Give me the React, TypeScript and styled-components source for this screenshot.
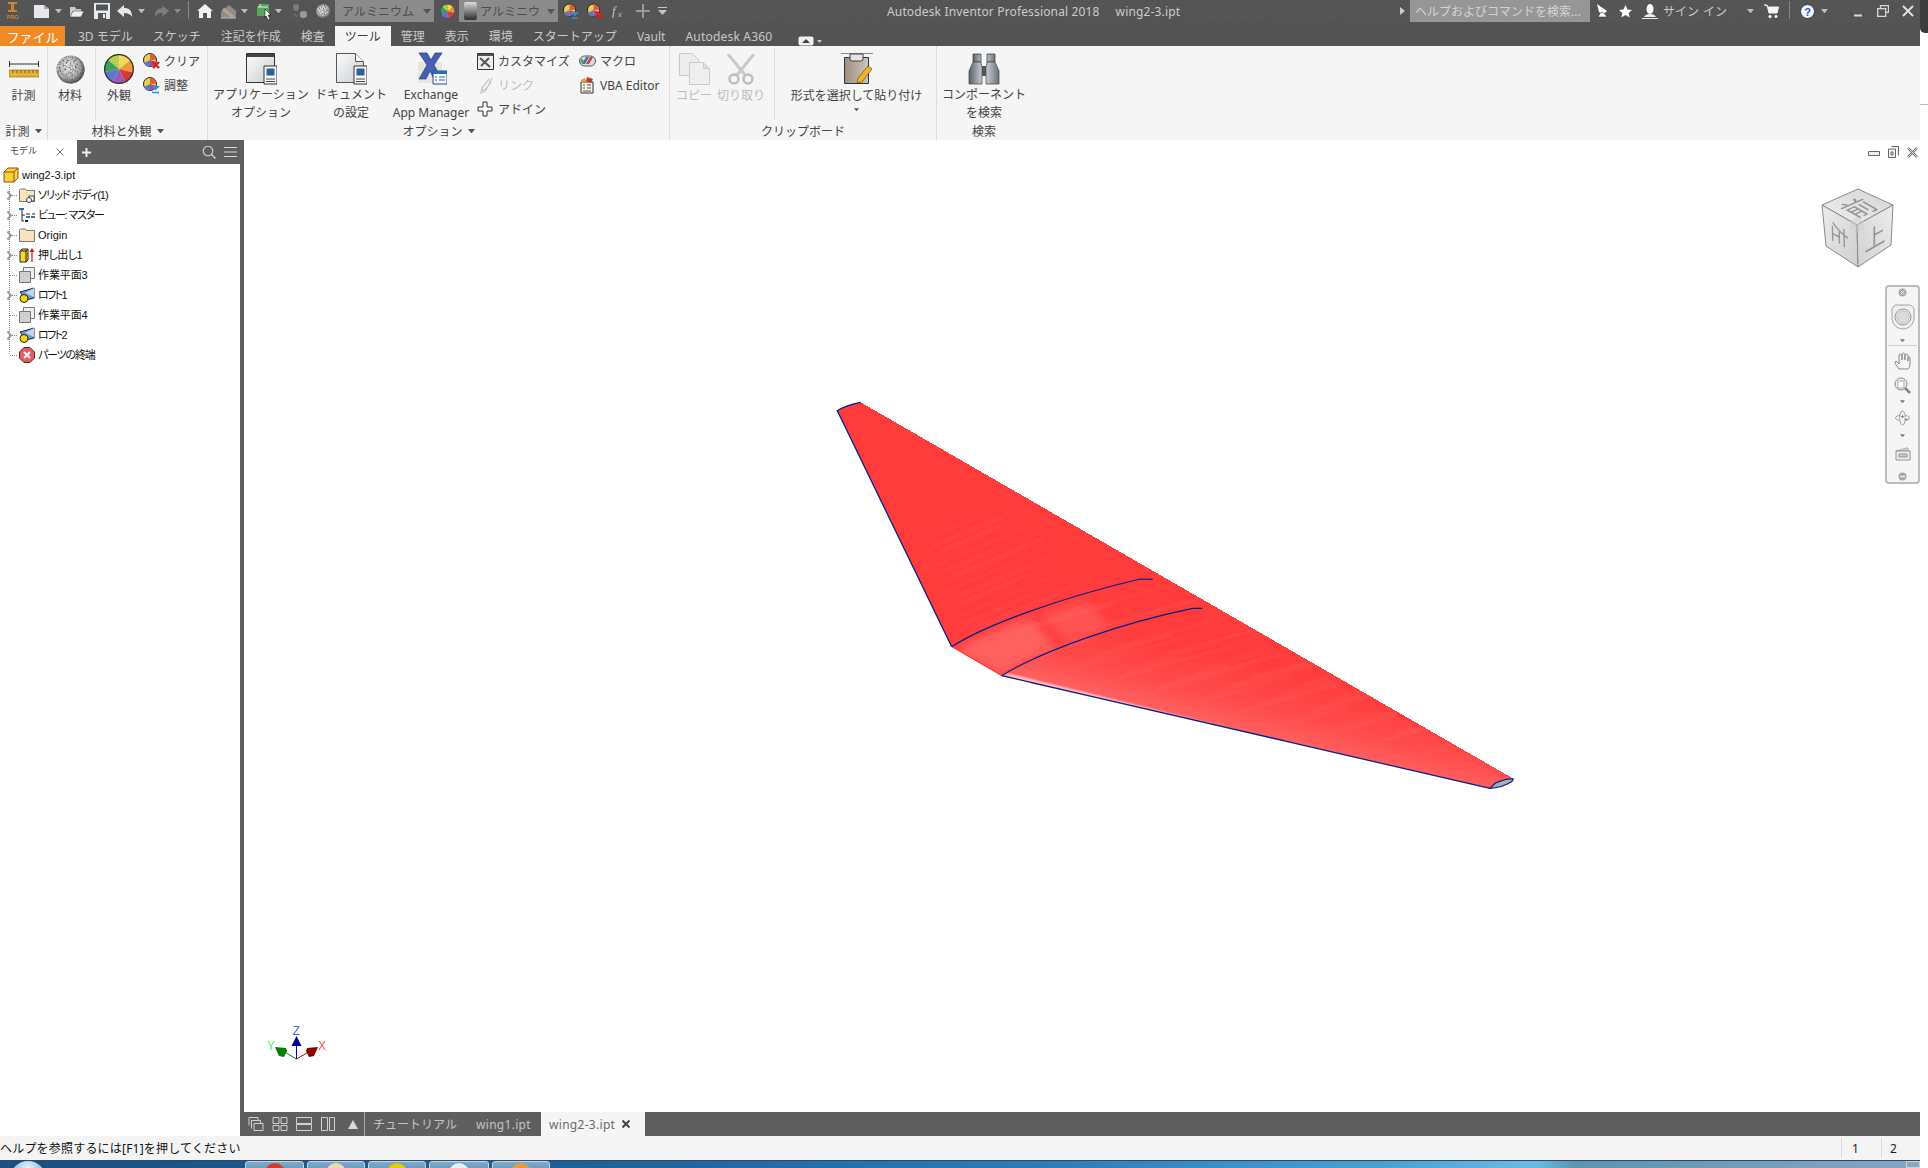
import React from 'react';
import styled, { createGlobalStyle } from 'styled-components';

const UI_FONT = `"Noto Sans", "Noto Sans CJK JP", sans-serif`;

const GlobalStyle = createGlobalStyle`
  html, body {
    margin: 0;
    padding: 0;
    background: #fff;
    overflow: hidden;
  }
  body {
    font-family: ${UI_FONT};
    font-size: 12px;
  }
`;

const Shell = styled.div`
  width: 1928px;
  height: 1168px;
  display: flex;
  overflow: hidden;
`;

const Win = styled.div`
  width: 1920px;
  height: 1168px;
  display: flex;
  flex-direction: column;
`;

const RightGutter = styled.div`
  width: 8px;
  height: 1168px;
  background: #fff;
`;

const GutterCorner = styled.div`
  height: 33px;
  background: #3c3c3c;
  border-bottom-left-radius: 5px;
`;

const GutterLine = styled.div`
  height: 1px;
  margin-top: 71px;
  background: #bdbdbd;
`;

const TitleBar = styled.div`
  height: 22px;
  display: flex;
  align-items: stretch;
  background: repeating-linear-gradient(135deg, #535353 0 2px, #585858 2px 3px);
  color: #cfcfcf;
`;

const Slot = styled.div<{ $w: number; $ml?: number }>`
  width: ${(p) => p.$w}px;
  margin-left: ${(p) => p.$ml || 0}px;
  flex: none;
  display: flex;
  align-items: center;
  justify-content: center;
`;

const Combo = styled.div<{ $w: number; $ml: number }>`
  width: ${(p) => p.$w}px;
  margin-left: ${(p) => p.$ml}px;
  flex: none;
  display: flex;
  align-items: center;
  gap: 2px;
  padding: 0 3px 0 7px;
  box-sizing: border-box;
  background: #8b8b8b;
  color: #4d4d4d;
  font-size: 12px;
  white-space: nowrap;

  span {
    flex: 1;
  }
`;

const SepV = styled.div<{ $ml: number }>`
  width: 1px;
  margin: 1px 0 3px ${(p) => p.$ml}px;
  background: #8a8a8a;
  flex: none;
`;

const WindowTitle = styled.div`
  margin-left: 220px;
  display: flex;
  gap: 16px;
  align-items: center;
  font-size: 12px;
  letter-spacing: 0.15px;
  color: #cccccc;
  white-space: nowrap;
`;

const HelpGroup = styled.div`
  margin-left: auto;
  padding-right: 6px;
  display: flex;
  align-items: stretch;
`;

const SearchBox = styled.div`
  width: 180px;
  margin-left: 5px;
  padding-left: 5px;
  box-sizing: border-box;
  display: flex;
  align-items: center;
  background: #969696;
  color: #d4d4d4;
  font-size: 12px;
  white-space: nowrap;
`;

const SignIn = styled.div`
  width: 82px;
  margin-left: 5px;
  display: flex;
  align-items: center;
  color: #c8c8c8;
  font-size: 12px;
  word-spacing: 1px;
  white-space: nowrap;
`;

const TabsBar = styled.div`
  height: 24px;
  display: flex;
  align-items: flex-end;
  background: #535353;
`;

const FileTab = styled.div`
  width: 65px;
  height: 20px;
  margin-right: 3px;
  display: flex;
  align-items: center;
  justify-content: center;
  background: #f08a24;
  color: #fff;
  font-size: 13px;
`;

const RibbonTab = styled.div<{ $active?: boolean; $wide?: boolean }>`
  height: 20px;
  padding: 0 10px;
  display: flex;
  align-items: center;
  font-size: 12px;
  white-space: nowrap;
  letter-spacing: ${(p) => (p.$wide ? '0.2px' : '0')};
  color: ${(p) => (p.$active ? '#3a3a3a' : '#c9c9c9')};
  background: ${(p) => (p.$active ? '#f5f5f5' : 'transparent')};
`;

const Ribbon = styled.div`
  height: 94px;
  display: flex;
  background: #f5f5f5;
  color: #444;
`;

const Panel = styled.div<{ $w: number; $last?: boolean }>`
  width: ${(p) => p.$w}px;
  box-sizing: border-box;
  display: flex;
  flex-direction: column;
  border-right: ${(p) => (p.$last ? 'none' : '1px solid #dcdcdc')};
`;

const PanelBody = styled.div`
  height: 76px;
  display: flex;
`;

const PanelTitle = styled.div`
  height: 18px;
  display: flex;
  align-items: center;
  justify-content: center;
  gap: 5px;
  white-space: nowrap;
`;

const LargeButton = styled.div<{ $w: number; $disabled?: boolean }>`
  width: ${(p) => p.$w}px;
  flex: none;
  display: flex;
  flex-direction: column;
  align-items: center;
  color: ${(p) => (p.$disabled ? '#bcbcbc' : 'inherit')};
`;

const LargeIcon = styled.div`
  height: 41px;
  padding-top: 5px;
  box-sizing: border-box;
  display: flex;
  align-items: center;
  justify-content: center;
`;

const LargeLabel = styled.div`
  line-height: 18px;
  text-align: center;
  white-space: nowrap;
`;

const DropHint = styled.div`
  height: 9px;
  display: flex;
  align-items: center;
  justify-content: center;
`;

const InnerSep = styled.div<{ $ml: number; $mr: number }>`
  width: 1px;
  height: 72px;
  margin: 2px ${(p) => p.$mr}px 0 ${(p) => p.$ml}px;
  background: #dcdcdc;
  flex: none;
`;

const SmallCol = styled.div<{ $ml: number; $w: number }>`
  width: ${(p) => p.$w}px;
  margin-left: ${(p) => p.$ml}px;
  padding-top: 3px;
  flex: none;
`;

const SmallRow = styled.div<{ $disabled?: boolean }>`
  height: 24px;
  display: flex;
  align-items: center;
  gap: 4px;
  white-space: nowrap;
  color: ${(p) => (p.$disabled ? '#bcbcbc' : 'inherit')};
`;

const Main = styled.div`
  flex: 1;
  min-height: 0;
  display: flex;
`;

const Browser = styled.div`
  width: 244px;
  box-sizing: border-box;
  flex: none;
  border-right: 4px solid #5f5f5f;
  background: #fff;
`;

const BrowserHead = styled.div`
  height: 24px;
  width: 244px;
  display: flex;
  background: #5f5f5f;
`;

const BrowserTab = styled.div`
  width: 77px;
  box-sizing: border-box;
  padding: 0 0 0 10px;
  display: flex;
  align-items: center;
  gap: 19px;
  background: #fff;
  color: #444;
  font-size: 9px;

  span {
    margin-bottom: 3px;
  }
`;

const BrowserTools = styled.div`
  flex: 1;
  display: flex;
  align-items: center;
  padding: 0 7px 0 5px;
  gap: 8px;
`;

const ToolSpacer = styled.span`
  flex: 1;
`;

const TreeList = styled.div`
  padding-top: 1px;
`;

const TreeRow = styled.div<{ $root?: boolean }>`
  height: 20px;
  display: flex;
  align-items: center;
  padding-left: ${(p) => (p.$root ? 3 : 0)}px;
  gap: 3px;
  color: #111;
  white-space: nowrap;
  font-family: "Liberation Sans", "Noto Sans CJK JP", sans-serif;
  font-size: 11px;
  font-feature-settings: "palt";
`;

const TreeLabel = styled.span<{ $tight: number }>`
  letter-spacing: ${(p) => -p.$tight}px;
  margin-bottom: ${(p) => (p.$tight ? 2 : 0)}px;
`;

const Work = styled.div`
  flex: 1;
  min-width: 0;
  display: flex;
  flex-direction: column;
`;

const Canvas = styled.div`
  flex: 1;
  position: relative;
  background: #fff;
  overflow: hidden;
`;

const Scene = styled.svg`
  position: absolute;
  left: 0;
  top: 0;
`;

const ViewControls = styled.div`
  position: absolute;
  top: 6px;
  right: 2px;
  display: flex;
  align-items: center;
  gap: 8px;
`;

const NavBar = styled.div`
  position: absolute;
  left: 1641px;
  top: 145px;
  width: 35px;
  height: 199px;
  box-sizing: border-box;
  border: 2px solid #bcbcbc;
  border-radius: 4px;
  background: #f5f5f5;
  display: flex;
  flex-direction: column;
  align-items: center;
`;

const NavItem = styled.div<{ $h: number }>`
  height: ${(p) => p.$h}px;
  flex: none;
  display: flex;
  align-items: center;
  justify-content: center;
  align-self: stretch;
`;

const NavFoot = styled(NavItem)`
  margin-top: auto;
`;

const NavDivider = styled.div`
  height: 1px;
  margin: 0 1px;
  align-self: stretch;
  flex: none;
  background: #cfcfcf;
`;

const DocBar = styled.div`
  height: 24px;
  display: flex;
  align-items: stretch;
  background: #5f5f5f;
`;

const DocTools = styled.div`
  width: 121px;
  box-sizing: border-box;
  padding-left: 4px;
  display: flex;
  align-items: center;
  gap: 8px;
  border-right: 1px solid #a8a8a8;
`;

const DocTab = styled.div<{ $active?: boolean; $w: number; $wide?: boolean }>`
  width: ${(p) => p.$w}px;
  box-sizing: border-box;
  display: flex;
  align-items: center;
  padding-left: 8px;
  gap: 7px;
  white-space: nowrap;
  letter-spacing: ${(p) => (p.$wide ? '0.3px' : '0')};
  color: ${(p) => (p.$active ? '#6a6a6a' : '#c4c4c4')};
  background: ${(p) => (p.$active ? '#f5f5f5' : 'transparent')};
`;

const Status = styled.div`
  height: 24px;
  display: flex;
  align-items: center;
  background: #f4f4f4;
  color: #111;
`;

const StatusText = styled.div`
  flex: 1;
  letter-spacing: 0.2px;
`;

const StatusCell = styled.div<{ $w: number; $pad: number }>`
  width: ${(p) => p.$w}px;
  height: 20px;
  box-sizing: border-box;
  padding-left: ${(p) => p.$pad}px;
  display: flex;
  align-items: center;
  border-left: 1px solid #d9d9d9;
  color: #222;
`;

const Taskbar = styled.div`
  height: 8px;
  display: flex;
  overflow: hidden;
  border-top: 1px solid #2c4a63;
  box-sizing: border-box;
  background: linear-gradient(90deg, #1b4f80 0%, #1f5f99 30%, #2d7dba 55%, #4b9fd2 72%, #69bce4 80%, #5b95ae 82%, #7aa0bb 94%, #86a6bf 100%);
`;

const Orb = styled.div`
  width: 36px;
  height: 36px;
  margin: 0 0 0 10px;
  border-radius: 50%;
  background: radial-gradient(circle at 50% 20%, #eaf3fa, #7fa9c9 60%);
  flex: none;
`;

const TaskGroup = styled.div`
  margin-left: 199px;
  display: flex;
  gap: 3px;
`;

const TaskButton = styled.div<{ $w: number; $c: string }>`
  width: ${(p) => p.$w}px;
  height: 20px;
  box-sizing: border-box;
  border: 1px solid #c5d6e4;
  border-radius: 3px 3px 0 0;
  background: linear-gradient(180deg, #7ea9c9, #4d83ad);
  display: flex;
  justify-content: center;

  &::after {
    content: '';
    width: 20px;
    height: 20px;
    margin-top: 1px;
    border-radius: 50% 50% 0 0;
    background: ${(p) => p.$c};
  }
`;

const CornerBtn = styled.div`
  margin-left: auto;
  width: 14px;
  border: 1px solid #c3d3df;
  box-sizing: border-box;
  background: #8fa7ba;
`;

/* ------------- icons ------------- */

const Tri = ({ c = '#bdbdbd', s = 7 }: { c?: string; s?: number }) => (
  <svg width={s} height={s / 2 + 1} viewBox="0 0 8 5">
    <path d="M0 0h8L4 5z" fill={c} />
  </svg>
);

const Logo = () => (
  <svg width="13" height="20" viewBox="0 0 13 20">
    <path d="M2 1h9v2H8v6h3v2H2V9h3V3H2z" fill="#c98436" />
    <text x="6.5" y="18" textAnchor="middle" fontSize="5.5" fontWeight="700" fill="#c98436" fontFamily="Liberation Sans">PRO</text>
  </svg>
);

const NewDoc = () => (
  <svg width="17" height="15" viewBox="0 0 17 15">
    <path d="M1 1h10l5 4v9H1z" fill="#e6e8ee" />
    <path d="M11 1v4h5" fill="#9da3ad" />
  </svg>
);
const OpenIco = () => (
  <svg width="16" height="13" viewBox="0 0 16 13">
    <path d="M1 2h5l1 2h5v2H4L1 12z" fill="#c9ccd2" />
    <path d="M4 6h11l-3 6H1z" fill="#eceef1" stroke="#30343a" strokeWidth=".5" />
  </svg>
);
const SaveIco = () => (
  <svg width="16" height="16" viewBox="0 0 16 16">
    <path d="M0 0h16v16H0z" fill="#e8eaee" />
    <path d="M2 1.5h12v6H2z" fill="#50565f" />
    <path d="M4 10h8v6H4z" fill="#50565f" />
    <path d="M9 11h2v4H9z" fill="#e8eaee" />
  </svg>
);
const ArrowTurn = ({ c, flip }: { c: string; flip?: boolean }) => (
  <svg width="16" height="13" viewBox="0 0 16 13" style={flip ? { transform: 'scaleX(-1)' } : undefined}>
    <path d="M7 0v3c5 0 8 2 8 9-2-3-4-4-8-4v4L0 6z" fill={c} />
  </svg>
);
const HomeIco = () => (
  <svg width="16" height="16" viewBox="0 0 16 16">
    <path d="M8 1l8 7h-2v7H10v-5H6v5H2V8H0z" fill="#f0f0f0" />
  </svg>
);
const SketchGrey = () => (
  <svg width="17" height="15" viewBox="0 0 17 15">
    <path d="M1 8l8-7 7 6v7H1z" fill="#8c8c8c" />
    <path d="M3 5l10 8" stroke="#b5a58e" strokeWidth="3" />
    <path d="M1 14h15" stroke="#bbb" />
  </svg>
);
const CubeCursor = () => (
  <svg width="15" height="17" viewBox="0 0 15 17">
    <path d="M0 4l3-3h9v12H0z" fill="#5ba55b" />
    <path d="M1 4h10M3 1v3" stroke="#dff0df" />
    <path d="M8 6l6 6h-3l2 4-2 1-2-4-1 2z" fill="#fff" stroke="#111" strokeWidth=".6" />
  </svg>
);
const GreyNodes = () => (
  <svg width="15" height="16" viewBox="0 0 15 16">
    <rect x="1" y="1" width="6" height="7" rx="3" fill="#7d7d7d" />
    <rect x="8" y="8" width="7" height="7" rx="3" fill="#999" />
    <path d="M3 10v3h3" stroke="#777" fill="none" />
  </svg>
);

const MaterialBall = ({ size }: { size: number }) => (
  <svg width={size} height={size} viewBox="0 0 30 30">
    <defs>
      <radialGradient id="ballShade" cx=".42" cy=".4" r=".62">
        <stop offset="0" stopColor="#f4f4f4" />
        <stop offset=".65" stopColor="#b4b4b4" />
        <stop offset="1" stopColor="#3a3a3a" />
      </radialGradient>
      <filter id="ballNoise" x="0" y="0" width="100%" height="100%">
        <feTurbulence type="fractalNoise" baseFrequency=".55" numOctaves="2" seed="4" />
        <feColorMatrix values="0 0 0 0 .15  0 0 0 0 .15  0 0 0 0 .15  3.2 0 0 0 -1.35" />
        <feComposite in2="SourceGraphic" operator="in" />
        <feMerge>
          <feMergeNode in="SourceGraphic" />
          <feMergeNode />
        </feMerge>
      </filter>
    </defs>
    <circle cx="15" cy="15" r="14.5" fill="url(#ballShade)" filter="url(#ballNoise)" />
  </svg>
);

const WHEEL = ['#b7cf4e', '#f1d957', '#e99a3a', '#d83a38', '#9a5bb5', '#5d78c8', '#3aa05a'];

const ColorBall = ({ size }: { size: number }) => {
  const n = WHEEL.length;
  const wedge = (i: number) => {
    const a0 = (i / n) * Math.PI * 2 - Math.PI * 0.78;
    const a1 = ((i + 1) / n) * Math.PI * 2 - Math.PI * 0.78;
    return `M15 15L${15 + 15 * Math.cos(a0)} ${15 + 15 * Math.sin(a0)}A15 15 0 0 1 ${15 + 15 * Math.cos(a1)} ${15 + 15 * Math.sin(a1)}z`;
  };
  return (
    <svg width={size} height={size} viewBox="0 0 30 30">
      {WHEEL.map((c, i) => (
        <path key={c} d={wedge(i)} fill={c} />
      ))}
      <circle cx="15" cy="15" r="14.3" fill="none" stroke="#2d2d2d" strokeWidth="1.2" />
    </svg>
  );
};

const BallClear = () => (
  <svg width="17" height="16" viewBox="0 0 17 16">
    <circle cx="7" cy="7" r="6.5" fill="#e9cf50" stroke="#222" />
    <path d="M7 7L1 10a6 6 0 0 0 6 3.5z" fill="#5d78c8" />
    <path d="M7 7l6 2a6 6 0 0 1-6 4z" fill="#b1478f" />
    <path d="M7 7V.8a6 6 0 0 1 6 6z" fill="#df5c3a" />
    <path d="M10 9l6 6m0-6l-6 6" stroke="#d21f1f" strokeWidth="2.4" />
  </svg>
);
const BallAdjust = () => (
  <svg width="17" height="17" viewBox="0 0 17 17">
    <circle cx="7" cy="7" r="6.5" fill="#e9cf50" stroke="#222" />
    <path d="M7 7L1 10a6 6 0 0 0 6 3.5z" fill="#5d78c8" />
    <path d="M7 7l6 2a6 6 0 0 1-6 4z" fill="#b1478f" />
    <path d="M7 7V.8a6 6 0 0 1 6 6z" fill="#df5c3a" />
    <path d="M8 9h9l-4.5 4.5z" fill="#2d8fd6" />
    <path d="M9 15.5h7" stroke="#2d8fd6" strokeWidth="1.5" />
  </svg>
);

const Ruler = () => (
  <svg width="30" height="20" viewBox="0 0 30 20">
    <path d="M.5 2v6M29.5 2v6M1 5h28" stroke="#333" fill="none" />
    <path d="M0 11h30v7H0z" fill="#e3b23c" stroke="#9a7420" strokeWidth=".7" />
    <path d="M4 11v3M8 11v3M12 11v3M16 11v3M20 11v3M24 11v3M28 11v3" stroke="#7a5a10" />
  </svg>
);

const MiniPanel = () => (
  <>
    <path d="M18 13h13v18H18z" fill="#f7f7f7" stroke="#333" />
    <path d="M20.5 15.5h8v7h-8z" fill="#2f5f9a" />
    <path d="M20 26h9M20 28.5h9" stroke="#444" />
  </>
);

const AppOptions = () => (
  <svg width="31" height="32" viewBox="0 0 31 32">
    <defs>
      <linearGradient id="paperG" x1="0" y1="0" x2="1" y2="1">
        <stop offset="0" stopColor="#fdfdfd" />
        <stop offset="1" stopColor="#c7ccd2" />
      </linearGradient>
    </defs>
    <path d="M.5.5h28v29H.5z" fill="url(#paperG)" stroke="#333" />
    <path d="M1 1h27v3H1z" fill="#454545" />
    <MiniPanel />
  </svg>
);

const DocOptions = () => (
  <svg width="31" height="32" viewBox="0 0 31 32">
    <path d="M.5.5h19l8 8v21H.5z" fill="url(#paperG)" stroke="#555" />
    <path d="M19.5.5v8h8" fill="#fff" stroke="#555" />
    <MiniPanel />
  </svg>
);

const ExchangeIco = () => (
  <svg width="31" height="33" viewBox="0 0 31 33">
    <path d="M2 10h24v21H2z" fill="#e7e7e0" />
    <path d="M3 1h8l4 7 4-7h7l-8 12 8 14h-8l-4-8-4 8H3l8-14z" fill="#4660b6" stroke="#27397f" strokeWidth=".7" />
    <path d="M17 19h14v13H17z" fill="#f7f7f7" stroke="#274c86" />
    <path d="M17 19h14v3H17z" fill="#2d6fb2" />
    <path d="M19 25h2M23 25h6M19 28h2M23 28h6" stroke="#2d6fb2" />
  </svg>
);

const CustomizeIco = () => (
  <svg width="17" height="17" viewBox="0 0 17 17">
    <path d="M.5.5h16v16H.5z" fill="#eee" stroke="#333" />
    <path d="M1 1h15v2H1z" fill="#555" />
    <path d="M3 5l10 9M4 13l8-8" stroke="#555" strokeWidth="2" />
  </svg>
);
const LinkIco = () => (
  <svg width="17" height="17" viewBox="0 0 17 17">
    <path d="M12 2L5 11a2 2 0 0 0 3 2l6-8M15 1l-6 12-5 3 1-5" stroke="#c8c8c8" strokeWidth="1.4" fill="none" />
  </svg>
);
const AddinIco = () => (
  <svg width="17" height="17" viewBox="0 0 17 17">
    <path d="M6 1h4v5h5v4h-5v5H6v-5H1V6h5z" fill="#f8f8f8" stroke="#333" />
  </svg>
);
const MacroIco = () => (
  <svg width="17" height="12" viewBox="0 0 17 12">
    <rect x=".5" y="1" width="16" height="10" rx="5" fill="#ddd" stroke="#555" />
    <path d="M3 9l4-7h3L6 9z" fill="#3a6fc4" />
    <path d="M7 9l4-7h3l-4 7z" fill="#d23b3b" />
    <path d="M1 6l2-3 2 3-2 3z" fill="#5aa65a" />
  </svg>
);
const VbaIco = () => (
  <svg width="17" height="17" viewBox="0 0 17 17">
    <path d="M2 5h12v11H2z" fill="#f6f3e4" stroke="#333" />
    <path d="M4 8h2M8 8h4M4 11h2M8 11h4M4 14h8" stroke="#555" />
    <path d="M8 0l6 2-2 4-5-2z" fill="#c93535" />
    <path d="M2 3l4-2 1 3-4 2z" fill="#d8a12a" />
  </svg>
);

const CopyIco = () => (
  <svg width="31" height="32" viewBox="0 0 31 32">
    <path d="M.5.5h13l6 6v16H.5z" fill="#ececec" stroke="#c9c9c9" />
    <path d="M10.5 9.5h14l6 6v16h-20z" fill="#efefef" stroke="#c9c9c9" />
    <path d="M24.5 9.5v6h6" fill="#ddd" stroke="#c9c9c9" />
  </svg>
);
const CutIco = () => (
  <svg width="28" height="31" viewBox="0 0 28 31">
    <path d="M1 0l17 21M27 0L10 21" stroke="#c8c8c8" strokeWidth="3" />
    <circle cx="7" cy="25" r="4.5" fill="none" stroke="#bdbdbd" strokeWidth="2.5" />
    <circle cx="21" cy="25" r="4.5" fill="none" stroke="#bdbdbd" strokeWidth="2.5" />
  </svg>
);
const PasteIco = () => (
  <svg width="32" height="32" viewBox="0 0 32 32">
    <defs>
      <linearGradient id="boardG" x1="0" y1="0" x2="1" y2="0">
        <stop offset="0" stopColor="#9c8f80" />
        <stop offset="1" stopColor="#cfc6bb" />
      </linearGradient>
    </defs>
    <path d="M0 .5h32" stroke="#888" />
    <path d="M3.5 4.5h24v26h-24z" fill="url(#boardG)" stroke="#333" />
    <path d="M9 1h13v5a2 2 0 0 1-2 2H11a2 2 0 0 1-2-2z" fill="#e5e5e5" stroke="#444" />
    <path d="M27 13l4 3-10 13-5 1 1-5z" fill="#f0b62a" stroke="#6b4a08" strokeWidth=".7" />
  </svg>
);
const Binoculars = () => (
  <svg width="32" height="32" viewBox="0 0 32 32">
    <defs>
      <linearGradient id="binoG" x1="0" y1="0" x2="1" y2="0">
        <stop offset="0" stopColor="#5a6168" />
        <stop offset=".5" stopColor="#d6dde3" />
        <stop offset="1" stopColor="#6a7178" />
      </linearGradient>
    </defs>
    <path d="M5 1h8v8H5zM19 1h8v8h-8z" fill="url(#binoG)" stroke="#333" strokeWidth=".7" />
    <path d="M5 9h8l1 6v16H1V18zM19 9h8l4 9v13H18V15z" fill="url(#binoG)" stroke="#444" strokeWidth=".7" />
    <path d="M14 13h4v10h-4z" fill="#555" />
  </svg>
);

const Satellite = () => (
  <svg width="12" height="14" viewBox="0 0 12 14">
    <path d="M1 0l10 7c-2 3-6 3-8 1z" fill="#fff" />
    <path d="M5 8l-3 5h9L8 9z" fill="#fff" stroke="#222" strokeWidth=".5" />
  </svg>
);
const StarIco = () => (
  <svg width="13" height="13" viewBox="0 0 13 13">
    <path d="M6.5 0l2 4.5 4.5.5-3.3 3 1 4.5-4.2-2.4-4.2 2.4 1-4.5L0 5l4.5-.5z" fill="#fff" />
  </svg>
);
const PersonIco = () => (
  <svg width="16" height="15" viewBox="0 0 16 15">
    <ellipse cx="8" cy="5" rx="3.5" ry="5" fill="#fff" />
    <path d="M2 13c1-2 3-3 6-3s5 1 6 3H2z" fill="#e9ecf2" />
    <path d="M0 14.5h16" stroke="#e9ecf2" />
  </svg>
);
const CartIco = () => (
  <svg width="15" height="15" viewBox="0 0 15 15">
    <path d="M0 1h3l2 8h8l1.5-6H4" fill="#f4f4f4" stroke="#f4f4f4" strokeWidth="1" />
    <circle cx="6" cy="12.5" r="1.5" fill="#fff" />
    <circle cx="12" cy="12.5" r="1.5" fill="#fff" />
  </svg>
);
const HelpIco = () => (
  <svg width="15" height="15" viewBox="0 0 15 15">
    <circle cx="7.5" cy="7.5" r="7" fill="#f4f6fb" stroke="#27355f" />
    <text x="7.5" y="11.5" textAnchor="middle" fontSize="11" fontWeight="700" fill="#2457c2" fontFamily="Liberation Sans">?</text>
  </svg>
);
const WinMin = () => (
  <svg width="8" height="12" viewBox="0 0 8 12">
    <path d="M0 10.5h8" stroke="#d8d8d8" strokeWidth="2" />
  </svg>
);
const WinRestore = () => (
  <svg width="12" height="12" viewBox="0 0 12 12">
    <path d="M3.5 3V.7h8v6.6H8.5M.7 3.7h8v7.6h-8z" fill="none" stroke="#d8d8d8" strokeWidth="1.3" />
  </svg>
);
const WinClose = () => (
  <svg width="12" height="12" viewBox="0 0 12 12">
    <path d="M1 1l10 10M11 1L1 11" stroke="#e4e4e4" strokeWidth="1.8" />
  </svg>
);

const FxIco = () => (
  <svg width="15" height="16" viewBox="0 0 15 16">
    <text x="0" y="12" fontSize="13" fontStyle="italic" fill="#c4c4c4" fontFamily="Liberation Serif">f</text>
    <text x="6" y="14" fontSize="8" fontStyle="italic" fill="#c4c4c4" fontFamily="Liberation Serif">x</text>
  </svg>
);
const PlusIco = ({ c = '#9a9a9a', s = 14, w = 2 }: { c?: string; s?: number; w?: number }) => (
  <svg width={s} height={s} viewBox="0 0 14 14">
    <path d="M7 0v14M0 7h14" stroke={c} strokeWidth={w} />
  </svg>
);
const QatMenu = () => (
  <svg width="9" height="8" viewBox="0 0 9 8">
    <path d="M0 .5h9" stroke="#c4c4c4" />
    <path d="M0 3h9L4.5 8z" fill="#c4c4c4" />
  </svg>
);
const MetalChip = () => (
  <svg width="15" height="20" viewBox="0 0 15 20" style={{ flex: 'none', marginLeft: -3 }}>
    <defs>
      <linearGradient id="chipG" x1="0" y1="0" x2="0" y2="1">
        <stop offset="0" stopColor="#dcdcdc" />
        <stop offset="1" stopColor="#2d2d2d" />
      </linearGradient>
    </defs>
    <rect x="1" y="1" width="13" height="18" rx="2" fill="url(#chipG)" />
  </svg>
);
const PanelArrows = () => (
  <svg width="16" height="10" viewBox="0 0 16 10">
    <rect x=".5" y=".5" width="15" height="9" rx="2" fill="#f0f0f0" />
    <path d="M4 7h8L8 3z" fill="#444" />
  </svg>
);

const SearchIco = () => (
  <svg width="14" height="14" viewBox="0 0 14 14">
    <circle cx="6" cy="6" r="4.8" fill="none" stroke="#d8d8d8" strokeWidth="1.1" />
    <path d="M9.5 9.5L13.5 13.5" stroke="#d8d8d8" strokeWidth="1.3" />
  </svg>
);
const MenuIco = () => (
  <svg width="13" height="10" viewBox="0 0 13 10">
    <path d="M0 .5h13M0 5h13M0 9.5h13" stroke="#d8d8d8" />
  </svg>
);
const SmallX = ({ c = '#555', s = 8, w = 1 }: { c?: string; s?: number; w?: number }) => (
  <svg width={s} height={s} viewBox="0 0 8 8">
    <path d="M.5.5l7 7m0-7l-7 7" stroke={c} strokeWidth={w} />
  </svg>
);

type TreeKind = 'part' | 'solid' | 'view' | 'folder' | 'extrude' | 'plane' | 'loft' | 'end';

const TreeIcon = ({ kind }: { kind: TreeKind }) => {
  if (kind === 'part') {
    return (
      <svg width="16" height="16" viewBox="0 0 16 16">
        <path d="M1 5l4-4h10v10l-4 4H1z" fill="#f3d43c" stroke="#a64a10" />
        <path d="M1 5h10v10M11 5l4-4" fill="none" stroke="#a64a10" />
      </svg>
    );
  }
  if (kind === 'folder' || kind === 'solid') {
    return (
      <svg width="16" height="16" viewBox="0 0 16 16">
        <path d="M.5 3.5l1-1.5h5l1 1.5h8v11H.5z" fill="#f7e3bd" stroke="#7a7a68" />
        {kind === 'solid' && (
          <>
            <rect x="10" y="9" width="5" height="5" fill="#fff" stroke="#444" />
            <circle cx="10" cy="13" r="2.5" fill="#fff" stroke="#444" />
          </>
        )}
      </svg>
    );
  }
  if (kind === 'view') {
    return (
      <svg width="16" height="16" viewBox="0 0 16 16">
        <path d="M0 1h5v2H0z" fill="#2f6fb2" />
        <path d="M3 3v11h2M3 8h3" stroke="#222" fill="none" />
        <path d="M7 7h4M13 7h3" stroke="#222" />
        <path d="M7 9h4v2H7zM12 9h4v2h-4z" fill="#2f6fb2" />
        <path d="M6 13h3v2H6z" fill="#222" />
      </svg>
    );
  }
  if (kind === 'extrude') {
    return (
      <svg width="16" height="16" viewBox="0 0 16 16">
        <path d="M1 4l2-2h6v11l-2 2H1z" fill="#f5da22" stroke="#222" />
        <path d="M1 4h6v11M7 4l2-2" fill="none" stroke="#222" />
        <path d="M13 15V3" stroke="#d11" strokeWidth="1.2" />
        <path d="M10.5 5L13 1l2.5 4z" fill="#d11" />
      </svg>
    );
  }
  if (kind === 'plane') {
    return (
      <svg width="16" height="16" viewBox="0 0 16 16">
        <path d="M4.5.5h11v11h-11z" fill="#f0f0f0" stroke="#777" />
        <path d="M.5 4.5h11v11H.5z" fill="#cfcfcf" stroke="#777" />
      </svg>
    );
  }
  if (kind === 'loft') {
    return (
      <svg width="16" height="16" viewBox="0 0 16 16">
        <path d="M1 5l14-4v10l-8 2z" fill="#6b9bd8" stroke="#223" />
        <path d="M6 6l9-5v9z" fill="#bcd8f3" />
        <circle cx="5" cy="11.5" r="4" fill="#f5d80c" stroke="#222" />
      </svg>
    );
  }
  return (
    <svg width="16" height="16" viewBox="0 0 16 16">
      <path d="M5 .5h6L15.5 5v6L11 15.5H5L.5 11V5z" fill="#ee5a5a" stroke="#333" />
      <path d="M5 5l6 6m0-6l-6 6" stroke="#fff" strokeWidth="2" />
    </svg>
  );
};

const TreeGutter = ({ open, last }: { open: boolean; last?: boolean }) => (
  <svg width="19" height="20" viewBox="0 0 19 20" style={{ flex: 'none', marginRight: -3 }}>
    <path d={last ? 'M9.5 0v10' : 'M9.5 0v20'} stroke="#888" strokeDasharray="1 1" />
    <path d="M10 10.5h8" stroke="#888" strokeDasharray="1 1" />
    {open && <path d="M7.5 6.5l3.5 4-3.5 4" stroke="#9c9c9c" strokeWidth="2" fill="none" />}
  </svg>
);

const TREE: { label: string; kind: TreeKind; open: boolean; tight: number }[] = [
  { label: 'ソリッド ボディ(1)', kind: 'solid', open: true, tight: 1 },
  { label: 'ビュー: マスター', kind: 'view', open: true, tight: 1.2 },
  { label: 'Origin', kind: 'folder', open: true, tight: 0 },
  { label: '押し出し1', kind: 'extrude', open: true, tight: 0.5 },
  { label: '作業平面3', kind: 'plane', open: false, tight: 0.1 },
  { label: 'ロフト1', kind: 'loft', open: true, tight: 1.6 },
  { label: '作業平面4', kind: 'plane', open: false, tight: 0.1 },
  { label: 'ロフト2', kind: 'loft', open: true, tight: 1.6 },
  { label: 'パーツの終端', kind: 'end', open: false, tight: 1.2 },
];

/* bottom tab bar glyphs */
const DocGlyph = ({ d }: { d: string }) => (
  <svg width="16" height="16" viewBox="0 0 16 16">
    <path d={d} fill="none" stroke="#d2d2d2" />
  </svg>
);

/* ------------- 3d scene ------------- */

const OUTLINE = 'M837.3 410.7Q846 405 860.7 402.3L1513 778.5L1490 788.3L1001.7 675.7L951.7 646.7Z';
const EDGE_A = 'M951.7 646.7C985 625 1060 598 1140 579L1152.7 579.3';
const EDGE_B = 'M1001.7 675.7C1040 652 1120 623 1193 608.3L1202.3 608.3';

const STREAKS = Array.from({ length: 46 }, (_, i) => {
  const t = i / 45;
  const x = 1000 + t * 470;
  const y = 668 + t * 108 - ((i * 37) % 60);
  const len = 50 + ((i * 53) % 90);
  return { x, y, len, o: 0.05 + ((i * 13) % 7) * 0.014 };
});

const STREAKS_TOP = Array.from({ length: 22 }, (_, i) => ({
  x: 905 + (i % 5) * 7 + i * 2,
  y: 530 + i * 5.2,
  len: 55 + ((i * 31) % 60),
  o: 0.03 + ((i * 11) % 5) * 0.012,
}));

const Wing = () => (
  <g>
    <defs>
      <clipPath id="wingClip">
        <path d={OUTLINE} />
      </clipPath>
      <linearGradient id="wingUnder" gradientUnits="userSpaceOnUse" x1="1245" y1="733" x2="1268" y2="640">
        <stop offset="0" stopColor="#ffb8b8" />
        <stop offset=".025" stopColor="#ff6060" />
        <stop offset=".28" stopColor="#ff4c4c" />
        <stop offset=".7" stopColor="#ff3d3d" />
        <stop offset="1" stopColor="#ff3b3b" />
      </linearGradient>
      <filter id="soft" x="-20%" y="-20%" width="140%" height="140%">
        <feGaussianBlur stdDeviation="5" />
      </filter>
      <filter id="softer" x="-20%" y="-20%" width="140%" height="140%">
        <feGaussianBlur stdDeviation="1.2" />
      </filter>
    </defs>
    <path d={OUTLINE} fill="#ff3b3b" shapeRendering="crispEdges" />
    <g clipPath="url(#wingClip)">
      <path d="M1001.7 675.7L1490 788.3L1513 778.5L1202 608.3C1120 623 1040 652 1001.7 675.7Z" fill="url(#wingUnder)" />
      <path d="M955 650L1001.7 675.7C1020 663 1040 654 1056 647L1030 618C1000 628 975 638 955 650Z" fill="#ff6060" filter="url(#soft)" />
      <path d="M1040 615L1085 600L1110 625L1068 642Z" fill="#ff5252" filter="url(#soft)" />
      <g filter="url(#softer)">
        {STREAKS.map((s, i) => (
          <path key={i} d={`M${s.x} ${s.y}l${s.len} ${-s.len * 0.28}`} stroke="#ff7a7a" strokeWidth="2" opacity={s.o * 2} />
        ))}
        {STREAKS_TOP.map((s, i) => (
          <path key={i} d={`M${s.x} ${s.y}l${s.len} ${-s.len * 0.42}`} stroke="#ff8a8a" strokeWidth="2" opacity={s.o * 2} />
        ))}
      </g>
    </g>
    <path d="M1490 788.3L1495 783.3C1500 781 1508 778 1513.3 779L1511.7 781.7C1506 785 1498 788 1490 788.3Z" fill="#a9adb4" stroke="#00208a" strokeWidth="1.2" />
    <path d="M951.7 646.7L837.3 410.7Q846 405 860.7 402.3" fill="none" stroke="#00208a" strokeWidth="1.3" />
    <path d="M951.7 646.7L1001.7 675.7" fill="none" stroke="#ff3030" strokeWidth="1" />
    <path d="M1001.7 675.7L1490 788.3" fill="none" stroke="#00208a" strokeWidth="1.3" />
    <path d={EDGE_A} fill="none" stroke="#00208a" strokeWidth="1.2" />
    <path d={EDGE_B} fill="none" stroke="#00208a" strokeWidth="1.2" />
  </g>
);

const Triad = () => (
  <g fontFamily="Liberation Sans" fontSize="12">
    <path d="M296.5 1059V1044" stroke="#0000c8" />
    <path d="M296.5 1059L281 1050" stroke="#009000" />
    <path d="M296.5 1059L312 1050" stroke="#b00000" />
    <path d="M296.5 1036l5 10h-10z" fill="#000096" />
    <path d="M275 1047l11 1 1 3-3 6-5-1z" fill="#008000" />
    <path d="M318 1047l-11 1-1 3 3 6 5-1z" fill="#8c0000" />
    <text x="296.5" y="1035" textAnchor="middle" fill="#5a5af0">Z</text>
    <text x="267" y="1050" fill="#5af05a">Y</text>
    <text x="318" y="1050" fill="#f05a5a">X</text>
  </g>
);

const ViewCube = () => (
  <g>
    <defs>
      <linearGradient id="cubeTop" x1="0" y1="1" x2="1" y2="0">
        <stop offset="0" stopColor="#f0f0f0" />
        <stop offset="1" stopColor="#d4d4d4" />
      </linearGradient>
      <linearGradient id="cubeLeft" x1="0" y1="0" x2="1" y2="1">
        <stop offset="0" stopColor="#ececec" />
        <stop offset="1" stopColor="#cfcfcf" />
      </linearGradient>
      <linearGradient id="cubeRight" x1="0" y1="1" x2="1" y2="0">
        <stop offset="0" stopColor="#d2d2d2" />
        <stop offset="1" stopColor="#ececec" />
      </linearGradient>
    </defs>
    <path d="M1858 189L1893 205L1857 225L1822 205Z" fill="url(#cubeTop)" stroke="#8a8a8a" />
    <path d="M1822 205L1857 225L1858 267L1826 246Z" fill="url(#cubeLeft)" stroke="#8a8a8a" />
    <path d="M1857 225L1893 205L1891 245L1858 267Z" fill="url(#cubeRight)" stroke="#8a8a8a" />
    <path d="M1857 217l7 4v8l-7 4-7-4v-8z" fill="#c9ced6" opacity=".5" />
    <g fontFamily="Noto Sans CJK JP" fill="#949494" textAnchor="middle" dominantBaseline="central">
      <text fontSize="34" transform="matrix(.72 -.32 .7 .4 1857.5 207)">前</text>
      <text fontSize="26" transform="matrix(.02 .82 -.7 -.4 1841 236)">左</text>
      <text fontSize="30" transform="matrix(.7 -.4 0 .82 1875 236)">上</text>
    </g>
  </g>
);

const NavDot = ({ close }: { close?: boolean }) => (
  <svg width="9" height="9" viewBox="0 0 9 9">
    <circle cx="4.5" cy="4.5" r="4" fill="#a8a8a8" />
    {close ? <path d="M2.5 2.5l4 4m0-4l-4 4" stroke="#eee" /> : <path d="M2 4.5h5" stroke="#eee" strokeWidth="1.5" />}
  </svg>
);

const Wheel = () => (
  <svg width="24" height="26" viewBox="0 0 24 26">
    <path d="M4 1h14a5 5 0 0 1 5 5v8c0 6-5 11-11 11S1 20 1 14V5z" fill="#f0f0f0" stroke="#a2a2a2" />
    <circle cx="12" cy="13" r="8" fill="#e3e3e3" stroke="#9c9c9c" />
    <circle cx="12" cy="13" r="6" fill="#dcdcdc" stroke="#c4c4c4" />
  </svg>
);
const HandIco = () => (
  <svg width="17" height="18" viewBox="0 0 17 18">
    <path d="M5 17C3 14 1 12 1 10l1-1 3 3V3l1.5-1L8 3v5-6l1.5-1L11 2v6-5l1.5-1L14 3v6-3l1.5-1L16 6v6c0 3-1 4-2 5z" fill="#f4f4f4" stroke="#888" />
  </svg>
);
const ZoomIco = () => (
  <svg width="17" height="17" viewBox="0 0 17 17">
    <circle cx="7" cy="7" r="6" fill="#f0f0f0" stroke="#8c8c8c" />
    <rect x="4" y="4" width="6" height="7" fill="#fff" stroke="#a8a8a8" />
    <path d="M11 11l5 5" stroke="#858585" strokeWidth="2.5" />
  </svg>
);
const OrbitIco = () => (
  <svg width="17" height="16" viewBox="0 0 17 17">
    <ellipse cx="8.5" cy="8.5" rx="7.5" ry="3" fill="none" stroke="#999" />
    <ellipse cx="8.5" cy="8.5" rx="3" ry="7.5" fill="#f5f5f5" stroke="#999" />
    <path d="M7 7h3M8.5 5.5v3M11 10h3" stroke="#777" />
  </svg>
);
const CameraIco = () => (
  <svg width="16" height="16" viewBox="0 0 16 16">
    <path d="M1 6l10-3 2 0v3z" fill="#d8d8d8" stroke="#999" strokeWidth=".7" />
    <path d="M1 6h14v9H1z" fill="#efefef" stroke="#8f8f8f" />
    <path d="M4 9h8v3H4z" fill="#ccc" stroke="#8f8f8f" />
  </svg>
);

const App = () => (
  <Shell>
    <GlobalStyle />
    <Win>
      <TitleBar>
        <Slot $w={13} $ml={6}><Logo /></Slot>
        <Slot $w={17} $ml={14}><NewDoc /></Slot>
        <Slot $w={7} $ml={5}><Tri /></Slot>
        <Slot $w={16} $ml={7}><OpenIco /></Slot>
        <Slot $w={16} $ml={9}><SaveIco /></Slot>
        <Slot $w={16} $ml={7}><ArrowTurn c="#e4e6ea" /></Slot>
        <Slot $w={7} $ml={5}><Tri /></Slot>
        <Slot $w={15} $ml={9}><ArrowTurn c="#7d7d7d" flip /></Slot>
        <Slot $w={7} $ml={5}><Tri c="#8b8b8b" /></Slot>
        <SepV $ml={7} />
        <Slot $w={16} $ml={8}><HomeIco /></Slot>
        <Slot $w={17} $ml={7}><SketchGrey /></Slot>
        <Slot $w={7} $ml={4}><Tri /></Slot>
        <Slot $w={15} $ml={9}><CubeCursor /></Slot>
        <Slot $w={7} $ml={3}><Tri /></Slot>
        <Slot $w={15} $ml={10}><GreyNodes /></Slot>
        <Slot $w={15} $ml={9}><MaterialBall size={15} /></Slot>
        <Combo $w={99} $ml={4}>
          <span>アルミニウム</span>
          <Tri c="#555" s={8} />
        </Combo>
        <Slot $w={15} $ml={6}><ColorBall size={15} /></Slot>
        <Combo $w={99} $ml={4}>
          <MetalChip />
          <span>アルミニウ</span>
          <Tri c="#555" s={8} />
        </Combo>
        <Slot $w={16} $ml={5}><BallAdjust /></Slot>
        <Slot $w={16} $ml={8}><BallClear /></Slot>
        <Slot $w={15} $ml={9}><FxIco /></Slot>
        <Slot $w={14} $ml={9}><PlusIco /></Slot>
        <Slot $w={9} $ml={8}><QatMenu /></Slot>
        <WindowTitle>
          <span>Autodesk Inventor Professional 2018</span>
          <span>wing2-3.ipt</span>
        </WindowTitle>
        <HelpGroup>
          <Slot $w={5}>
            <svg width="5" height="8" viewBox="0 0 5 8"><path d="M0 0l5 4-5 4z" fill="#ccc" /></svg>
          </Slot>
          <SearchBox>ヘルプおよびコマンドを検索...</SearchBox>
          <Slot $w={12} $ml={6}><Satellite /></Slot>
          <Slot $w={13} $ml={11}><StarIco /></Slot>
          <Slot $w={16} $ml={10}><PersonIco /></Slot>
          <SignIn>サイン イン</SignIn>
          <Slot $w={7} $ml={2}><Tri /></Slot>
          <Slot $w={15} $ml={10}><CartIco /></Slot>
          <SepV $ml={10} />
          <Slot $w={15} $ml={10}><HelpIco /></Slot>
          <Slot $w={7} $ml={6}><Tri /></Slot>
          <Slot $w={8} $ml={26}><WinMin /></Slot>
          <Slot $w={12} $ml={15}><WinRestore /></Slot>
          <Slot $w={12} $ml={13}><WinClose /></Slot>
        </HelpGroup>
      </TitleBar>

      <TabsBar>
        <FileTab>ファイル</FileTab>
        <RibbonTab>3D モデル</RibbonTab>
        <RibbonTab>スケッチ</RibbonTab>
        <RibbonTab>注記を作成</RibbonTab>
        <RibbonTab>検査</RibbonTab>
        <RibbonTab $active>ツール</RibbonTab>
        <RibbonTab>管理</RibbonTab>
        <RibbonTab>表示</RibbonTab>
        <RibbonTab>環境</RibbonTab>
        <RibbonTab>スタートアップ</RibbonTab>
        <RibbonTab>Vault</RibbonTab>
        <RibbonTab $wide>Autodesk A360</RibbonTab>
        <Slot $w={24} $ml={16}>
          <PanelArrows />
          <svg width="5" height="3" viewBox="0 0 5 3" style={{ marginLeft: 3 }}><path d="M0 0h5L2.5 3z" fill="#ccc" /></svg>
        </Slot>
      </TabsBar>

      <Ribbon>
        <Panel $w={48}>
          <PanelBody>
            <LargeButton $w={47}>
              <LargeIcon><Ruler /></LargeIcon>
              <LargeLabel>計測</LargeLabel>
            </LargeButton>
          </PanelBody>
          <PanelTitle>計測 <Tri c="#555" /></PanelTitle>
        </Panel>

        <Panel $w={160}>
          <PanelBody>
            <LargeButton $w={44}>
              <LargeIcon><MaterialBall size={29} /></LargeIcon>
              <LargeLabel>材料</LargeLabel>
            </LargeButton>
            <InnerSep $ml={3} $mr={0} />
            <LargeButton $w={46}>
              <LargeIcon><ColorBall size={30} /></LargeIcon>
              <LargeLabel>外観</LargeLabel>
            </LargeButton>
            <SmallCol $ml={1} $w={60}>
              <SmallRow><BallClear />クリア</SmallRow>
              <SmallRow><BallAdjust />調整</SmallRow>
            </SmallCol>
          </PanelBody>
          <PanelTitle>材料と外観 <Tri c="#555" /></PanelTitle>
        </Panel>

        <Panel $w={462}>
          <PanelBody>
            <LargeButton $w={106}>
              <LargeIcon><AppOptions /></LargeIcon>
              <LargeLabel>アプリケーション<br />オプション</LargeLabel>
            </LargeButton>
            <LargeButton $w={74}>
              <LargeIcon><DocOptions /></LargeIcon>
              <LargeLabel>ドキュメント<br />の設定</LargeLabel>
            </LargeButton>
            <LargeButton $w={86}>
              <LargeIcon><ExchangeIco /></LargeIcon>
              <LargeLabel>Exchange<br />App Manager</LargeLabel>
            </LargeButton>
            <SmallCol $ml={3} $w={93}>
              <SmallRow><CustomizeIco />カスタマイズ</SmallRow>
              <SmallRow $disabled><LinkIco />リンク</SmallRow>
              <SmallRow><AddinIco />アドイン</SmallRow>
            </SmallCol>
            <SmallCol $ml={9} $w={85}>
              <SmallRow><MacroIco />マクロ</SmallRow>
              <SmallRow><VbaIco />VBA Editor</SmallRow>
            </SmallCol>
          </PanelBody>
          <PanelTitle>オプション <Tri c="#555" /></PanelTitle>
        </Panel>

        <Panel $w={267}>
          <PanelBody>
            <LargeButton $w={48} $disabled>
              <LargeIcon><CopyIco /></LargeIcon>
              <LargeLabel>コピー</LargeLabel>
            </LargeButton>
            <LargeButton $w={46} $disabled>
              <LargeIcon><CutIco /></LargeIcon>
              <LargeLabel>切り取り</LargeLabel>
            </LargeButton>
            <InnerSep $ml={10} $mr={2} />
            <LargeButton $w={159}>
              <LargeIcon><PasteIco /></LargeIcon>
              <LargeLabel>形式を選択して貼り付け</LargeLabel>
              <DropHint><Tri c="#555" s={5} /></DropHint>
            </LargeButton>
          </PanelBody>
          <PanelTitle>クリップボード</PanelTitle>
        </Panel>

        <Panel $w={94} $last>
          <PanelBody>
            <LargeButton $w={94}>
              <LargeIcon><Binoculars /></LargeIcon>
              <LargeLabel>コンポーネント<br />を検索</LargeLabel>
            </LargeButton>
          </PanelBody>
          <PanelTitle>検索</PanelTitle>
        </Panel>
      </Ribbon>

      <Main>
        <Browser>
          <BrowserHead>
            <BrowserTab><span>モデル</span><SmallX c="#666" s={8} /></BrowserTab>
            <BrowserTools>
              <PlusIco c="#eee" s={9} w={3} />
              <ToolSpacer />
              <SearchIco />
              <MenuIco />
            </BrowserTools>
          </BrowserHead>
          <TreeList>
            <TreeRow $root>
              <TreeIcon kind="part" />
              wing2-3.ipt
            </TreeRow>
            {TREE.map((t, i) => (
              <TreeRow key={t.label}>
                <TreeGutter open={t.open} last={i === TREE.length - 1} />
                <TreeIcon kind={t.kind} />
                <TreeLabel $tight={t.tight}>{t.label}</TreeLabel>
              </TreeRow>
            ))}
          </TreeList>
        </Browser>

        <Work>
          <Canvas>
            <Scene width="1676" height="972" viewBox="244 140 1676 972">
              <Wing />
              <Triad />
              <ViewCube />
            </Scene>
            <ViewControls>
              <svg width="12" height="12" viewBox="0 0 12 12"><path d="M.5 5.5h11v4H.5z" fill="#eee" stroke="#666" /></svg>
              <svg width="11" height="12" viewBox="0 0 11 12"><path d="M3.5.5h7v9M.5 3h7v8.5h-7z" fill="#f2f2f2" stroke="#666" /><path d="M3 6h2v3H3z" fill="none" stroke="#666" /></svg>
              <svg width="11" height="11" viewBox="0 0 11 11"><path d="M1 1l9 9m0-9l-9 9" stroke="#666" strokeWidth="2.4" /><path d="M1 1l9 9m0-9l-9 9" stroke="#fff" strokeWidth=".8" /></svg>
            </ViewControls>
            <NavBar>
              <NavItem $h={10}><NavDot close /></NavItem>
              <NavItem $h={40}><Wheel /></NavItem>
              <NavItem $h={8}><Tri c="#777" s={5} /></NavItem>
              <NavDivider />
              <NavItem $h={30}><HandIco /></NavItem>
              <NavItem $h={18}><ZoomIco /></NavItem>
              <NavItem $h={16}><Tri c="#777" s={5} /></NavItem>
              <NavItem $h={16}><OrbitIco /></NavItem>
              <NavItem $h={19}><Tri c="#777" s={5} /></NavItem>
              <NavItem $h={16}><CameraIco /></NavItem>
              <NavFoot $h={12}><NavDot /></NavFoot>
            </NavBar>
          </Canvas>
          <DocBar>
            <DocTools>
              <DocGlyph d="M1 1.5h9v3M3.5 4.5h9v3M6 7.5h9v7H6zM3.5 4.5v8M1 1.5v8" />
              <DocGlyph d="M1 1.5h6v6H1zM9 1.5h6v6H9zM1 9.5h6v5H1zM9 9.5h6v5H9z" />
              <DocGlyph d="M.5 1.5h15v6H.5zM.5 8.5h15v6H.5z" />
              <DocGlyph d="M1.5 1.5h6v13h-6zM9.5 1.5h5v13h-5z" />
              <svg width="10" height="9" viewBox="0 0 10 9" style={{ marginLeft: 4 }}><path d="M5 0l5 9H0z" fill="#dcdcdc" /></svg>
            </DocTools>
            <DocTab $w={103}>チュートリアル</DocTab>
            <DocTab $w={73} $wide>wing1.ipt</DocTab>
            <DocTab $w={104} $active $wide>wing2-3.ipt <SmallX c="#444" s={8} w={2} /></DocTab>
          </DocBar>
        </Work>
      </Main>

      <Status>
        <StatusText>ヘルプを参照するには[F1]を押してください</StatusText>
        <StatusCell $w={40} $pad={10}>1</StatusCell>
        <StatusCell $w={39} $pad={8}>2</StatusCell>
      </Status>

      <Taskbar>
        <Orb />
        <TaskGroup>
          <TaskButton $w={59} $c="#d8392b" />
          <TaskButton $w={58} $c="#f0d7b0" />
          <TaskButton $w={58} $c="#e8c800" />
          <TaskButton $w={60} $c="#e9eef4" />
          <TaskButton $w={58} $c="#e89a3a" />
        </TaskGroup>
        <CornerBtn />
      </Taskbar>
    </Win>
    <RightGutter>
      <GutterCorner />
      <GutterLine />
    </RightGutter>
  </Shell>
);

export default App;
